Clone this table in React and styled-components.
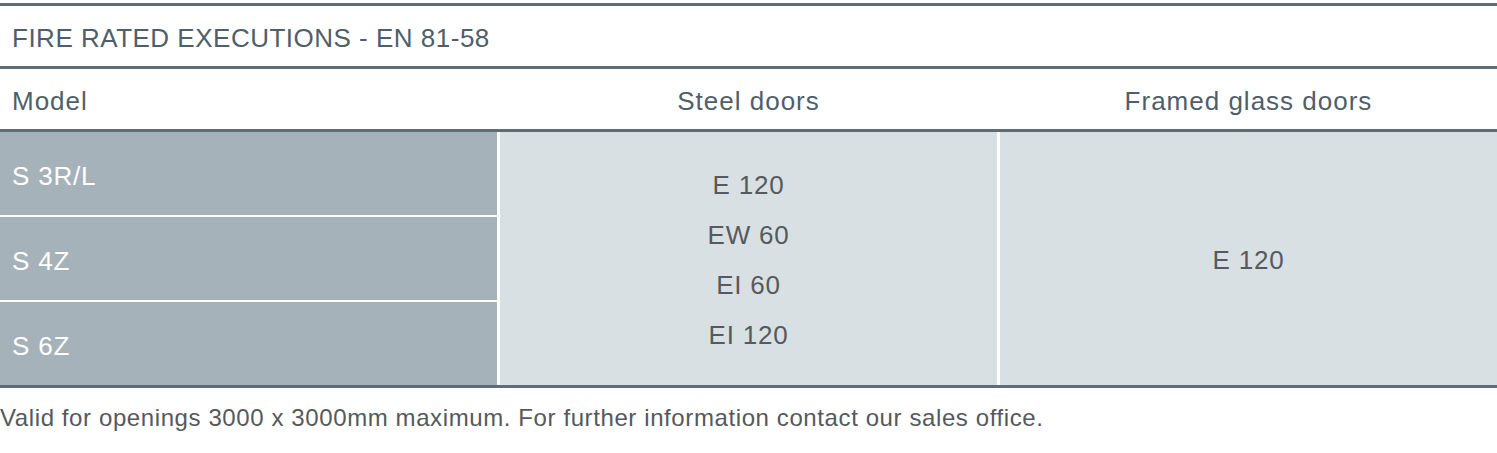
import React from 'react';
import styled, { createGlobalStyle } from 'styled-components';

const GlobalStyle = createGlobalStyle`
    body {
        margin: 0;
        background: #ffffff;
        font-family: "Liberation Sans", Arial, sans-serif;
    }
`

const Wrapper = styled.div`
    width: 1497px;
    padding-top: 3px;
`

const Rule = styled.div`
    height: 3px;
    background-color: #5c6d77;
`

const TitleRow = styled.div`
    height: 60px;
    box-sizing: border-box;
    display: flex;
    align-items: center;
    padding: 5px 0 0 12px;
    font-size: 26px;
    letter-spacing: 0.5px;
    color: #4f5e69;
`

const HeaderRow = styled.div`
    display: grid;
    grid-template-columns: 497px 497px 1fr;
    column-gap: 3px;
    height: 60px;
    box-sizing: border-box;
    padding-top: 4px;
    align-items: center;
    font-size: 26px;
    letter-spacing: 1px;
    color: #4f5e69;
`

const HeaderCell = styled.div`
    text-align: ${props => props.left ? "left" : "center"};
    padding-left: ${props => props.left ? "12px" : "0"};
`

const Body = styled.div`
    display: grid;
    grid-template-columns: 497px 497px 1fr;
    grid-template-rows: repeat(3, 83px);
    column-gap: 3px;
    row-gap: 2px;
    background-color: #ffffff;
`

const ModelCell = styled.div`
    background-color: #a6b2ba;
    color: #ffffff;
    font-size: 26px;
    letter-spacing: 0.8px;
    display: flex;
    align-items: center;
    padding-left: 12px;
    padding-top: 5px;
`

const ValueCell = styled.div`
    grid-row: 1 / span 3;
    grid-column: ${props => props.col};
    background-color: #d9e0e4;
    color: #555a5e;
    font-size: 26px;
    letter-spacing: 0.8px;
    display: flex;
    flex-direction: column;
    align-items: center;
    justify-content: center;
    line-height: 50px;
    padding-top: 2px;
`

const Note = styled.div`
    margin-top: 16px;
    font-size: 24px;
    letter-spacing: 0.6px;
    color: #55595c;
`

const models = ["S 3R/L", "S 4Z", "S 6Z"];
const steel = ["E 120", "EW 60", "EI 60", "EI 120"];

export default function App() {
    return (
        <Wrapper>
            <GlobalStyle />
            <Rule />
            <TitleRow>FIRE RATED EXECUTIONS - EN 81-58</TitleRow>
            <Rule />
            <HeaderRow>
                <HeaderCell left>Model</HeaderCell>
                <HeaderCell>Steel doors</HeaderCell>
                <HeaderCell>Framed glass doors</HeaderCell>
            </HeaderRow>
            <Rule />
            <Body>
                {models.map((m, i) => (
                    <ModelCell key={m} style={{ gridRow: i + 1, gridColumn: 1 }}>{m}</ModelCell>
                ))}
                <ValueCell col={2}>
                    {steel.map(s => <div key={s}>{s}</div>)}
                </ValueCell>
                <ValueCell col={3}>
                    <div>E 120</div>
                </ValueCell>
            </Body>
            <Rule />
            <Note>Valid for openings 3000 x 3000mm maximum. For further information contact our sales office.</Note>
        </Wrapper>
    );
}
